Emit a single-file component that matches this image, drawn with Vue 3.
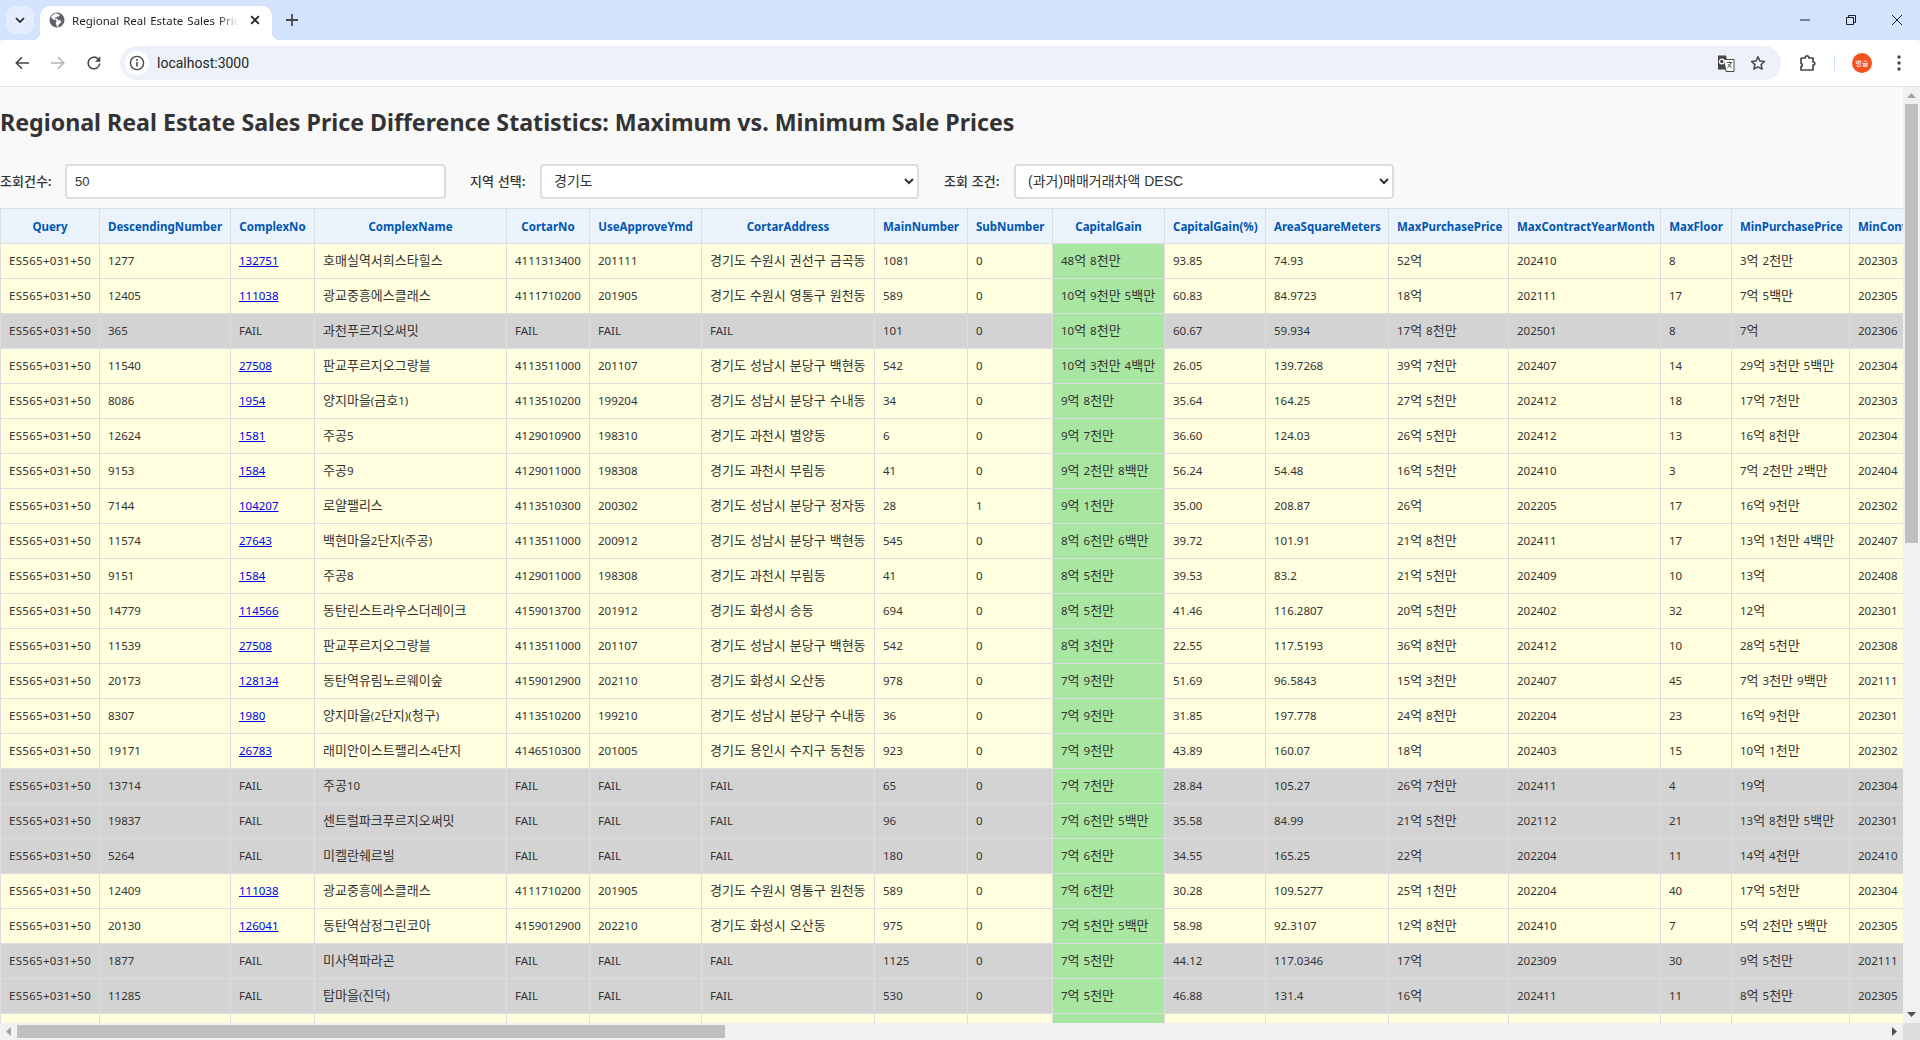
<script setup>
const columns = [
  ['Query', 99], ['DescendingNumber', 131], ['ComplexNo', 84], ['ComplexName', 192], ['CortarNo', 83],
  ['UseApproveYmd', 112], ['CortarAddress', 173], ['MainNumber', 93], ['SubNumber', 85], ['CapitalGain', 112],
  ['CapitalGain(%)', 101], ['AreaSquareMeters', 123], ['MaxPurchasePrice', 120], ['MaxContractYearMonth', 152],
  ['MaxFloor', 71], ['MinPurchasePrice', 118], ['MinContractYearMonth', 152]
]

const raw = `1277|132751|호매실역서희스타힐스|4111313400|201111|경기도 수원시 권선구 금곡동|1081|0|48억 8천만|93.85|74.93|52억|202410|8|3억 2천만|202303
12405|111038|광교중흥에스클래스|4111710200|201905|경기도 수원시 영통구 원천동|589|0|10억 9천만 5백만|60.83|84.9723|18억|202111|17|7억 5백만|202305
365|FAIL|과천푸르지오써밋|FAIL|FAIL|FAIL|101|0|10억 8천만|60.67|59.934|17억 8천만|202501|8|7억|202306
11540|27508|판교푸르지오그랑블|4113511000|201107|경기도 성남시 분당구 백현동|542|0|10억 3천만 4백만|26.05|139.7268|39억 7천만|202407|14|29억 3천만 5백만|202304
8086|1954|양지마을(금호1)|4113510200|199204|경기도 성남시 분당구 수내동|34|0|9억 8천만|35.64|164.25|27억 5천만|202412|18|17억 7천만|202303
12624|1581|주공5|4129010900|198310|경기도 과천시 별양동|6|0|9억 7천만|36.60|124.03|26억 5천만|202412|13|16억 8천만|202304
9153|1584|주공9|4129011000|198308|경기도 과천시 부림동|41|0|9억 2천만 8백만|56.24|54.48|16억 5천만|202410|3|7억 2천만 2백만|202404
7144|104207|로얄팰리스|4113510300|200302|경기도 성남시 분당구 정자동|28|1|9억 1천만|35.00|208.87|26억|202205|17|16억 9천만|202302
11574|27643|백현마을2단지(주공)|4113511000|200912|경기도 성남시 분당구 백현동|545|0|8억 6천만 6백만|39.72|101.91|21억 8천만|202411|17|13억 1천만 4백만|202407
9151|1584|주공8|4129011000|198308|경기도 과천시 부림동|41|0|8억 5천만|39.53|83.2|21억 5천만|202409|10|13억|202408
14779|114566|동탄린스트라우스더레이크|4159013700|201912|경기도 화성시 송동|694|0|8억 5천만|41.46|116.2807|20억 5천만|202402|32|12억|202301
11539|27508|판교푸르지오그랑블|4113511000|201107|경기도 성남시 분당구 백현동|542|0|8억 3천만|22.55|117.5193|36억 8천만|202412|10|28억 5천만|202308
20173|128134|동탄역유림노르웨이숲|4159012900|202110|경기도 화성시 오산동|978|0|7억 9천만|51.69|96.5843|15억 3천만|202407|45|7억 3천만 9백만|202111
8307|1980|양지마을(2단지)(청구)|4113510200|199210|경기도 성남시 분당구 수내동|36|0|7억 9천만|31.85|197.778|24억 8천만|202204|23|16억 9천만|202301
19171|26783|래미안이스트팰리스4단지|4146510300|201005|경기도 용인시 수지구 동천동|923|0|7억 9천만|43.89|160.07|18억|202403|15|10억 1천만|202302
13714|FAIL|주공10|FAIL|FAIL|FAIL|65|0|7억 7천만|28.84|105.27|26억 7천만|202411|4|19억|202304
19837|FAIL|센트럴파크푸르지오써밋|FAIL|FAIL|FAIL|96|0|7억 6천만 5백만|35.58|84.99|21억 5천만|202112|21|13억 8천만 5백만|202301
5264|FAIL|미켈란쉐르빌|FAIL|FAIL|FAIL|180|0|7억 6천만|34.55|165.25|22억|202204|11|14억 4천만|202410
12409|111038|광교중흥에스클래스|4111710200|201905|경기도 수원시 영통구 원천동|589|0|7억 6천만|30.28|109.5277|25억 1천만|202204|40|17억 5천만|202304
20130|126041|동탄역삼정그린코아|4159012900|202210|경기도 화성시 오산동|975|0|7억 5천만 5백만|58.98|92.3107|12억 8천만|202410|7|5억 2천만 5백만|202305
1877|FAIL|미사역파라곤|FAIL|FAIL|FAIL|1125|0|7억 5천만|44.12|117.0346|17억|202309|30|9억 5천만|202111
11285|FAIL|탑마을(진덕)|FAIL|FAIL|FAIL|530|0|7억 5천만|46.88|131.4|16억|202411|11|8억 5천만|202305`

const rows = raw.split('\n').map((line) => {
  const f = line.split('|')
  return { cells: ['ES565+031+50', ...f], fail: f[1] === 'FAIL' }
})

const split = (text) =>
  text.split(/([가-힣]+)/).filter(Boolean).map((t) => ({ t, ko: /[가-힣]/.test(t) }))
</script>

<template>
  <div class="window">
    <header class="tabstrip">
      <div class="tabsearch">
        <svg width="12" height="12" viewBox="0 0 12 12"><path d="M2 4l4 4 4-4" fill="none" stroke="#1f1f1f" stroke-width="1.7"/></svg>
      </div>
      <div class="tab">
        <svg class="globe" width="16" height="16" viewBox="0 0 16 16">
          <circle cx="8" cy="8" r="7.5" fill="#5f6368"/>
          <path d="M6.8 1.2C5 2 3 3.2 2 5.200l2.500 2.600h2.200l1 1.500-1 1.700 1.200 3.600 1.300-.2 1-2.400 2-1.600-.5-1.800-2.700-.5-1-1.400H5.600l.8-1.200h1.400l.7-.9 1.500-.2.600-1.500-1.300-.9z" fill="#fff"/>
        </svg>
        <span class="tabtitle">Regional Real Estate Sales Price Difference Statistics</span>
        <svg width="16" height="16" viewBox="0 0 16 16"><path d="M4.200 4.200l7.600 7.600M11.800 4.200l-7.600 7.600" stroke="#1f1f1f" stroke-width="1.800"/></svg>
      </div>
      <svg class="newtab" width="14" height="14" viewBox="0 0 14 14"><path d="M7 1v12M1 7h12" stroke="#444746" stroke-width="1.800"/></svg>
      <div class="winctrls">
        <svg width="12" height="12" viewBox="0 0 12 12"><path d="M1 6h10" stroke="#1f1f1f" stroke-width="1"/></svg>
        <svg width="12" height="12" viewBox="0 0 12 12"><path d="M1.500 3.500h7v7h-7zM3.500 3.500v-2h7v7h-2" fill="none" stroke="#1f1f1f" stroke-width="1"/></svg>
        <svg width="12" height="12" viewBox="0 0 12 12"><path d="M1 1l10 10M11 1L1 11" stroke="#1f1f1f" stroke-width="1"/></svg>
      </div>
    </header>

    <nav class="toolbar">
      <svg class="navicon" width="16" height="16" viewBox="0 0 16 16"><path d="M15 8H2.500M8 2.300L2.300 8 8 13.700" fill="none" stroke="#474747" stroke-width="1.600"/></svg>
      <svg class="navicon" width="16" height="16" viewBox="0 0 16 16"><path d="M1 8h12.500M8 2.300L13.700 8 8 13.700" fill="none" stroke="#b2b4b6" stroke-width="1.600"/></svg>
      <svg class="navicon" width="16" height="16" viewBox="0 0 16 16"><path d="M13.700 8.500A5.800 5.800 0 1 1 12 3.800" fill="none" stroke="#474747" stroke-width="1.600"/><path d="M14.300 1.300v5.400H8.900z" fill="#474747"/></svg>
      <div class="omnibox">
        <span class="siteinfo">
          <svg width="16" height="16" viewBox="0 0 16 16"><circle cx="8" cy="8" r="6.600" fill="none" stroke="#474747" stroke-width="1.400"/><path d="M8 7v4.500" stroke="#474747" stroke-width="1.600"/><circle cx="8" cy="4.900" r="1" fill="#474747"/></svg>
        </span>
        <span class="url">localhost:3000</span>
        <svg class="translate" width="18" height="18" viewBox="0 0 18 18">
          <path d="M1 1.500h8l3 14H1z" fill="#474747"/>
          <path d="M6.500 5.500h10.500v12H9z" fill="#fff" stroke="#474747" stroke-width="1"/>
          <circle cx="4.800" cy="7.500" r="2.300" fill="none" stroke="#fff" stroke-width="1.200"/>
          <path d="M10 8.500h5M12.500 7.500v1M14 8.500c-.5 2.500-2 4-3.500 5M11 10c.8 1.500 2 2.800 3.500 3.500" fill="none" stroke="#474747" stroke-width="1"/>
        </svg>
        <svg class="star" width="16" height="16" viewBox="0 0 16 16"><path d="M8 1.800l1.900 4.200 4.600.5-3.400 3.100 1 4.500L8 11.800l-4.100 2.300 1-4.500-3.400-3.100 4.600-.5z" fill="none" stroke="#474747" stroke-width="1.500" stroke-linejoin="round"/></svg>
      </div>
      <svg class="puzzle" width="18" height="18" viewBox="0 0 18 18"><path d="M3 4h3.200c-.3-2.800 4-2.800 3.700 0H14v4c2.400-.3 2.400 3.300 0 3v5H2v-3.500c1.700.2 1.700-3 0-3V4.500z" fill="none" stroke="#474747" stroke-width="1.700" stroke-linejoin="round"/></svg>
      <span class="divider"></span>
      <span class="avatar">병술</span>
      <svg class="dots" width="4" height="16" viewBox="0 0 4 16"><circle cx="2" cy="2" r="1.700" fill="#474747"/><circle cx="2" cy="8" r="1.700" fill="#474747"/><circle cx="2" cy="14" r="1.700" fill="#474747"/></svg>
    </nav>

    <main class="page">
      <div class="view">
        <h1>Regional Real Estate Sales Price Difference Statistics: Maximum vs. Minimum Sale Prices</h1>
        <div class="controls">
          <label class="lab lab1">조회건수:</label>
          <input class="field f1" type="text" value="50" />
          <label class="lab lab2">지역 선택:</label>
          <select class="field f2"><option>경기도</option></select>
          <label class="lab lab3">조회 조건:</label>
          <select class="field f3"><option>(과거)매매거래차액 DESC</option></select>
        </div>
        <table>
          <colgroup>
            <col v-for="c in columns" :key="c[0]" :style="{ width: c[1] + 'px' }" />
          </colgroup>
          <thead>
            <tr><th v-for="c in columns" :key="c[0]">{{ c[0] }}</th></tr>
          </thead>
          <tbody>
            <tr v-for="(r, i) in rows" :key="i" :class="{ fail: r.fail }">
              <td v-for="(v, j) in r.cells" :key="j" :class="{ gain: j === 9, q: j === 0 }">
                <a v-if="j === 2 && !r.fail" href="#">{{ v }}</a>
                <template v-else>
                  <template v-for="(s, k) in split(v)" :key="k"><span v-if="s.ko" class="ko">{{ s.t }}</span><template v-else>{{ s.t }}</template></template>
                </template>
              </td>
            </tr>
            <tr>
              <td v-for="(c, j) in columns" :key="c[0]" :class="{ gain: j === 9 }">&nbsp;</td>
            </tr>
          </tbody>
        </table>
      </div>
      <div class="vbar">
        <span class="btn"><svg width="9" height="5" viewBox="0 0 9 5"><path d="M4.500 0L9 5H0z" fill="#a3a3a3"/></svg></span>
        <div class="vthumb"></div>
        <span class="btn end"><svg width="9" height="5" viewBox="0 0 9 5"><path d="M0 0h9L4.500 5z" fill="#505050"/></svg></span>
      </div>
      <div class="hbar">
        <span class="btn"><svg width="5" height="9" viewBox="0 0 5 9"><path d="M5 0v9L0 4.500z" fill="#a3a3a3"/></svg></span>
        <div class="hthumb"></div>
        <span class="btn end"><svg width="5" height="9" viewBox="0 0 5 9"><path d="M0 0l5 4.500L0 9z" fill="#505050"/></svg></span>
      </div>
      <div class="corner"></div>
    </main>
  </div>
</template>

<style>
html, body { margin: 0; padding: 0; overflow: hidden; }
</style>

<style scoped>
.window {
  height: 1040px;
  display: flex;
  flex-direction: column;
  background: #f9f9f9;
  font-family: "Noto Sans", "Noto Sans CJK KR", sans-serif;
  overflow: hidden;
}
.tabstrip {
  height: 40px;
  flex: none;
  background: #d3e3fd;
  display: flex;
  align-items: flex-start;
  padding-left: 6px;
  box-sizing: border-box;
}
.tabsearch {
  width: 28px;
  height: 28px;
  margin-top: 6px;
  border-radius: 9px;
  background: #e4edfc;
  display: flex;
  align-items: center;
  justify-content: center;
}
.tab {
  position: relative;
  width: 232px;
  height: 34px;
  margin: 6px 0 0 6px;
  box-sizing: border-box;
  padding: 0 9px 6px 9px;
  background: #fff;
  border-radius: 10px 10px 0 0;
  display: flex;
  align-items: center;
}
.tab::before, .tab::after {
  content: "";
  position: absolute;
  bottom: 0;
  width: 8px;
  height: 8px;
  background: radial-gradient(circle at 0 0, transparent 8px, #fff 8.500px);
}
.tab::before { left: -8px; }
.tab::after { right: -8px; background: radial-gradient(circle at 100% 0, transparent 8px, #fff 8.500px); }
.globe { flex: none; margin-right: 7px; }
.tabtitle {
  flex: 1;
  overflow: hidden;
  white-space: nowrap;
  margin-right: 8px;
  font-size: 11.500px;
  color: #1f1f1f;
  word-spacing: 1px;
  -webkit-mask-image: linear-gradient(to right, #000 88%, transparent 100%);
  mask-image: linear-gradient(to right, #000 88%, transparent 100%);
}
.newtab { margin: 13px 0 0 13px; }
.winctrls {
  margin-left: auto;
  width: 138px;
  height: 40px;
  display: flex;
  align-items: center;
  justify-content: space-around;
}
.toolbar {
  height: 47px;
  flex: none;
  box-sizing: border-box;
  background: #fff;
  border-bottom: 1px solid #e3e3e3;
  border-radius: 8px 8px 0 0;
  display: flex;
  align-items: center;
  padding: 0 0 0 14px;
  position: relative;
}
.navicon { margin-right: 20px; flex: none; }
.omnibox {
  width: 1661px;
  height: 34px;
  margin-left: -2px;
  box-sizing: border-box;
  background: #edf2fa;
  border-radius: 17px;
  display: flex;
  align-items: center;
  padding-left: 5px;
  flex: none;
}
.siteinfo {
  width: 24px;
  height: 24px;
  background: #fff;
  border-radius: 50%;
  display: flex;
  align-items: center;
  justify-content: center;
}
.url {
  margin-left: 8px;
  font-size: 14px;
  font-family: "Roboto", sans-serif;
  color: #1f1f1f;
}
.translate { margin-left: auto; }
.star { margin: 0 15px 0 15px; }
.puzzle { margin-left: 18px; flex: none; }
.divider { width: 1px; height: 16px; margin-left: 17px; background: #d3e3fd; flex: none; }
.avatar {
  width: 20px;
  height: 20px;
  margin-left: 17px;
  border-radius: 50%;
  background: #f4511e;
  color: #fff;
  font-size: 7px;
  line-height: 20px;
  text-align: center;
  font-family: "Noto Sans CJK KR", sans-serif;
  flex: none;
}
.dots { margin-left: 25px; flex: none; }

.page {
  flex: 1;
  min-height: 0;
  display: grid;
  grid-template-columns: minmax(0, 1fr) 17px;
  grid-template-rows: minmax(0, 1fr) 17px;
}
.view { overflow: hidden; min-width: 0; min-height: 0; }
.vbar, .hbar { background: #f1f1f1; display: flex; }
.vbar { flex-direction: column; }
.btn { width: 17px; height: 17px; flex: none; display: flex; align-items: center; justify-content: center; }
.end { margin: auto 0 0 0; }
.hbar .end { margin: 0 0 0 auto; }
.vthumb { height: 439px; margin: 0 2px; background: #bfbfbf; flex: none; }
.hthumb { width: 708px; margin: 2px 0; background: #bfbfbf; flex: none; }
.corner { background: #dcdcdc; }
h1 {
  margin: 0;
  padding: 17px 0 24px;
  font-size: 23.200px;
  line-height: 36px;
  font-weight: 700;
  color: #333;
  white-space: nowrap;
}
.controls { display: flex; align-items: center; height: 35px; width: 1395px; margin-bottom: 9px; }
.lab {
  font-size: 13px;
  color: #333;
  font-weight: 500;
  font-family: "Noto Sans CJK KR", sans-serif;
  white-space: nowrap;
  word-spacing: 1px;
  padding-bottom: 2px;
}
.lab1 { width: 65px; flex: none; }
.lab2 { width: 70px; flex: none; margin-left: 24px; }
.lab3 { width: 70px; flex: none; margin-left: 25px; }
.field {
  box-sizing: border-box;
  height: 35px;
  flex: none;
  border: 2px solid #ddd;
  border-radius: 4px;
  padding: 8px;
  background: #fff;
  color: #333;
  font-size: 14px;
  font-family: "Liberation Sans", "Noto Sans CJK KR", sans-serif;
  outline: none;
}
.f1 { width: 381px; font-size: 13px; }
.f2 { width: 379px; padding: 6px 8px 8px; }
.f3 { width: 380px; padding: 6px 8px 8px; }
table {
  border-collapse: collapse;
  table-layout: fixed;
  width: 2001px;
}
th, td {
  border: 1px solid #ddd;
  padding: 8px;
  height: 35px;
  line-height: 18px;
  white-space: nowrap;
  overflow: hidden;
  text-align: left;
  box-sizing: border-box;
}
th {
  background: #eaf3fc;
  color: #0056b3;
  font-size: 11.500px;
  font-weight: 700;
  text-align: center;
  padding: 9px 8px 7px;
}
td {
  background: #ffffe0;
  color: #333;
  font-size: 11.500px;
  word-spacing: 1px;
}
.q { letter-spacing: .3px; }
.ko { font-family: "Noto Sans CJK KR", sans-serif; font-size: 13px; line-height: 1; }
tr.fail td { background: #d3d3d3; }
td.gain, tr.fail td.gain { background: #a8e6a1; }
td a { color: #0000ee; text-decoration: underline; }
</style>
